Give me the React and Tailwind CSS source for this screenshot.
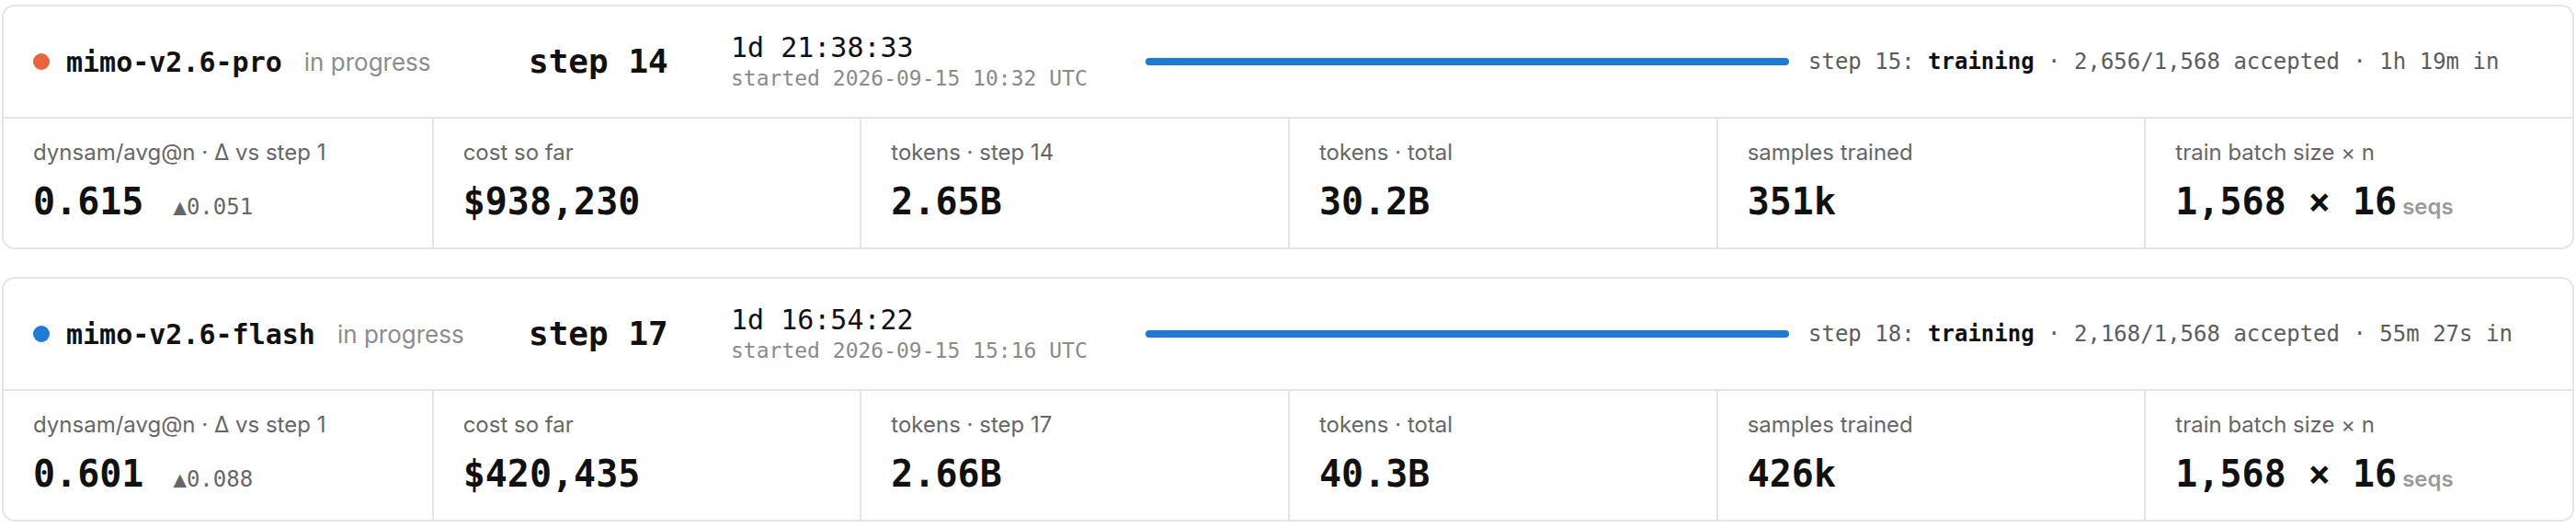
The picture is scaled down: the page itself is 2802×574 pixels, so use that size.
import React from "react";

const mono = "font-['DejaVu_Sans_Mono',monospace]";
const sans = "font-['Inter',sans-serif]";

const runs = [
  {
    name: "mimo-v2.6-pro",
    dot: "bg-[#e9643b]",
    step: 14,
    elapsed: "1d 21:38:33",
    started: "2026-09-15 10:32 UTC",
    next: 15,
    accepted: "2,656/1,568",
    since: "1h 19m",
    score: "0.615",
    delta: "0.051",
    cost: "$938,230",
    stepTokens: "2.65B",
    totalTokens: "30.2B",
    samples: "351k",
  },
  {
    name: "mimo-v2.6-flash",
    dot: "bg-[#1f7bd6]",
    step: 17,
    elapsed: "1d 16:54:22",
    started: "2026-09-15 15:16 UTC",
    next: 18,
    accepted: "2,168/1,568",
    since: "55m 27s",
    score: "0.601",
    delta: "0.088",
    cost: "$420,435",
    stepTokens: "2.66B",
    totalTokens: "40.3B",
    samples: "426k",
  },
];

function Metric({ label, first, children }) {
  return (
    <div
      className={
        "px-[32px] pt-[21px] pb-[26px] " +
        (first ? "" : "border-l-2 border-[#e6e5e1]")
      }
    >
      <div className={`${sans} text-[24px] leading-[32px] text-[#666666] whitespace-nowrap`}>
        {label}
      </div>
      <div className="mt-[13px] flex items-baseline whitespace-nowrap">{children}</div>
    </div>
  );
}

function Value({ children }) {
  return (
    <span className={`${mono} text-[40px] leading-[48px] font-bold text-[#111111]`}>
      {children}
    </span>
  );
}

function RunCard({ run }) {
  return (
    <div className="rounded-[14px] border-2 border-[#e6e5e1] bg-white overflow-hidden">
      <div className="h-[122px] flex items-center px-[32px] border-b-2 border-[#e6e5e1]">
        <div className="w-[539px] flex items-center shrink-0">
          <span className={`w-[18px] h-[18px] rounded-full ${run.dot}`} />
          <span className={`${mono} ml-[18px] text-[30px] font-bold text-[#111111]`}>
            {run.name}
          </span>
          <span className={`${sans} ml-[24px] text-[26px] text-[#8c8c8c]`}>in progress</span>
        </div>
        <div className={`${mono} w-[220px] shrink-0 text-[36px] font-bold text-[#111111]`}>
          step {run.step}
        </div>
        <div className={`${mono} w-[451px] shrink-0 flex flex-col`}>
          <span className="text-[30px] leading-[36px] text-[#111111]">{run.elapsed}</span>
          <span className="text-[23px] leading-[31px] text-[#8a8a8a]">
            started {run.started}
          </span>
        </div>
        <div className="flex-1 h-[8px] rounded-full bg-[#1e7bd4]" />
        <div className={`${mono} ml-[21px] w-[799px] shrink-0 text-[24px] text-[#5c5c5c] whitespace-nowrap`}>
          step {run.next}: <span className="font-bold text-[#111111]">training</span> · {run.accepted} accepted · {run.since} in
        </div>
      </div>
      <div className="grid grid-cols-6">
        <Metric label="dynsam/avg@n · Δ vs step 1" first>
          <Value>{run.score}</Value>
          <span className={`${mono} ml-[32px] text-[24px] text-[#666666]`}>▲{run.delta}</span>
        </Metric>
        <Metric label="cost so far">
          <Value>{run.cost}</Value>
        </Metric>
        <Metric label={`tokens · step ${run.step}`}>
          <Value>{run.stepTokens}</Value>
        </Metric>
        <Metric label="tokens · total">
          <Value>{run.totalTokens}</Value>
        </Metric>
        <Metric label="samples trained">
          <Value>{run.samples}</Value>
        </Metric>
        <Metric label="train batch size × n">
          <Value>1,568 × 16</Value>
          <span className={`${sans} ml-[6px] text-[24px] font-semibold text-[#9a9a9a]`}>seqs</span>
        </Metric>
      </div>
    </div>
  );
}

export default function App() {
  return (
    <div className="w-[2802px] h-[574px] bg-white px-[2px] pt-[5px] flex flex-col gap-[30px]">
      {runs.map((run) => (
        <RunCard key={run.name} run={run} />
      ))}
    </div>
  );
}
